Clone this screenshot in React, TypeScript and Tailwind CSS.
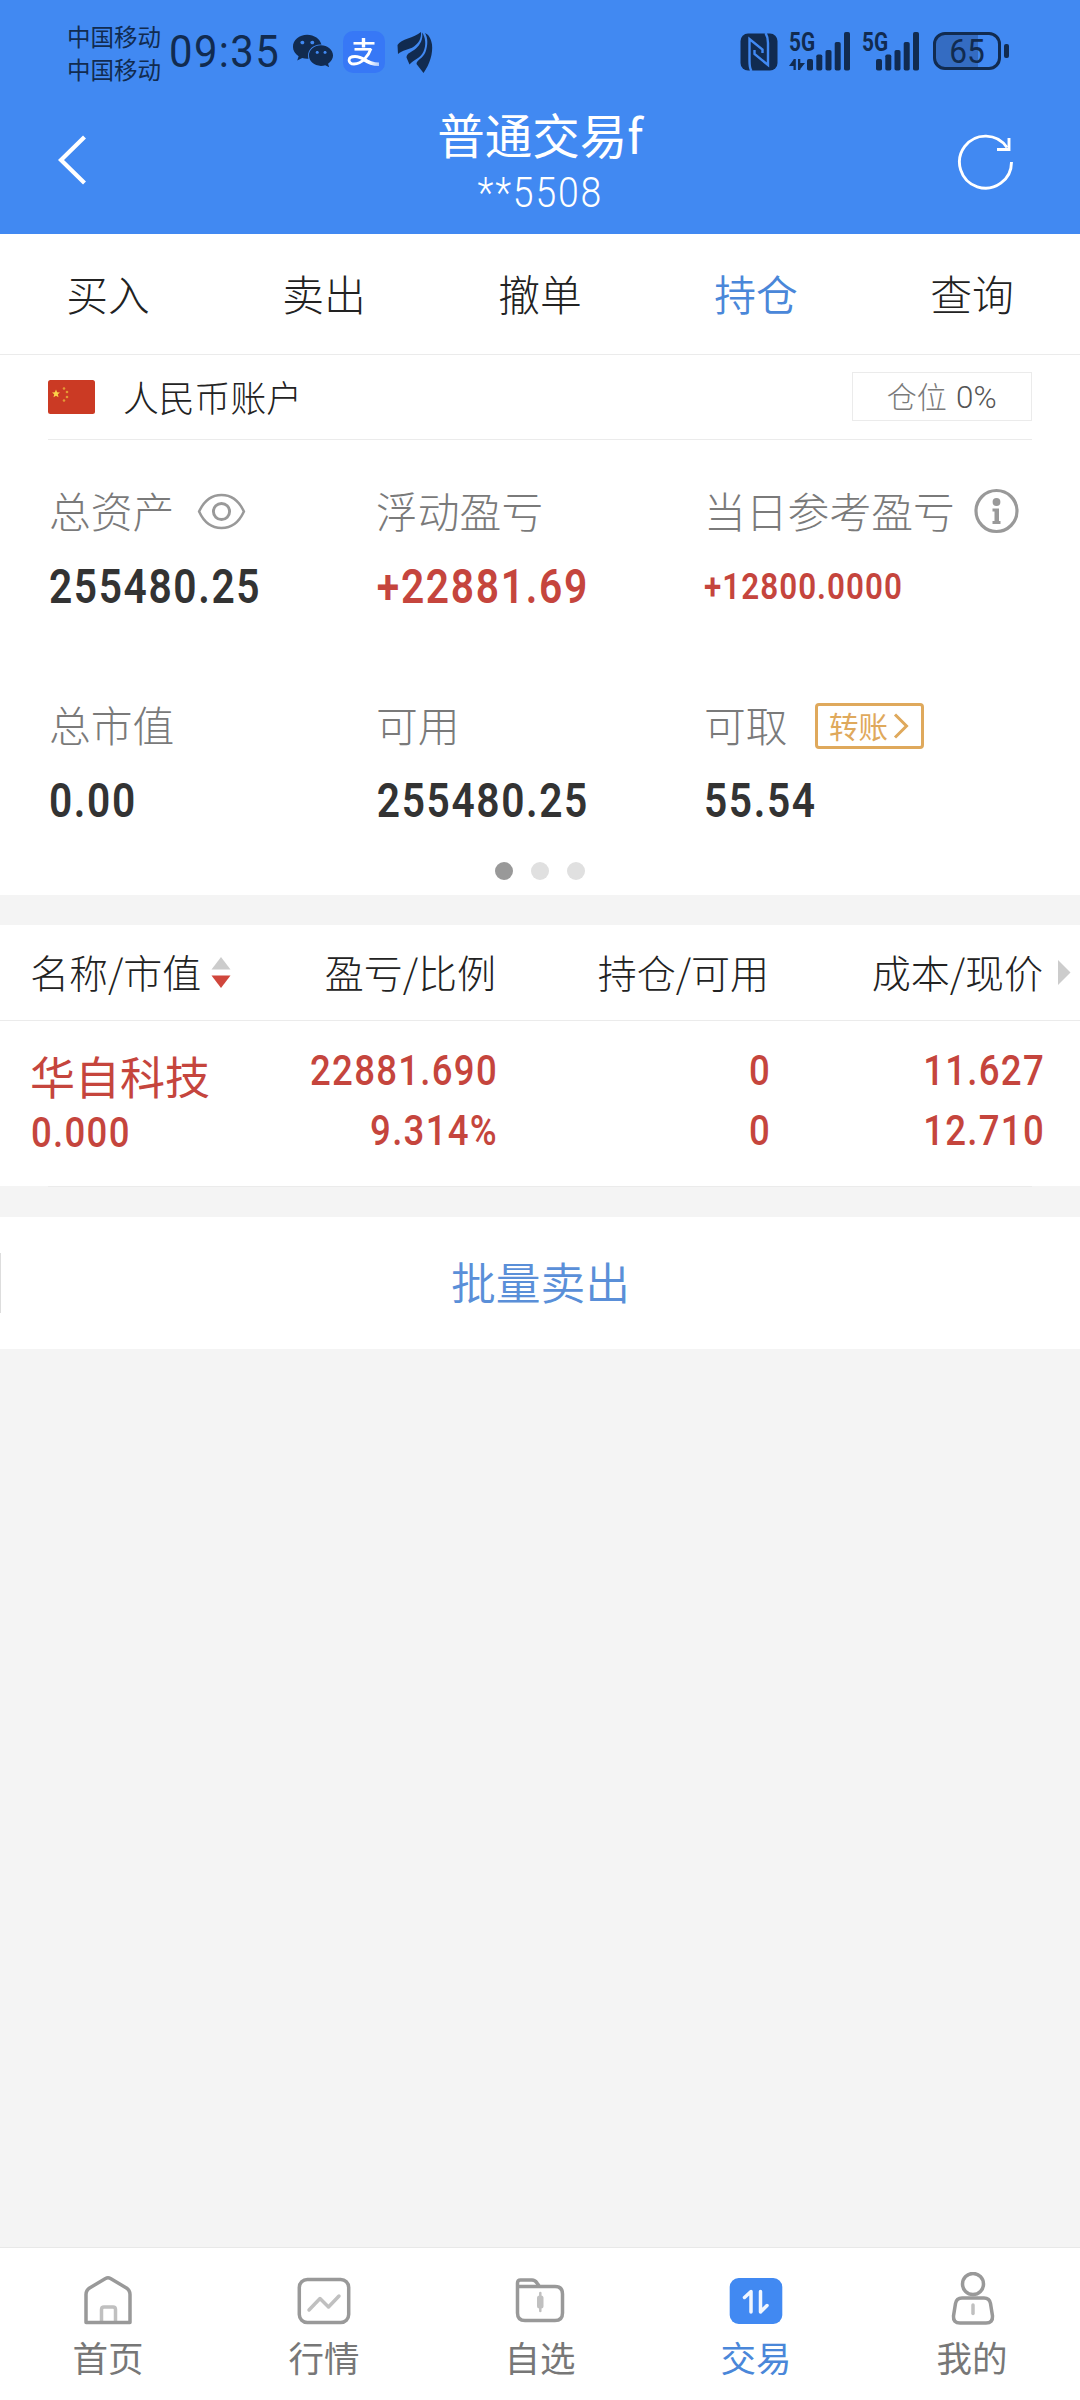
import { useState, type ReactNode } from "react"
import { FaWeixin } from "react-icons/fa"
import clsx from "clsx"

const TABS = ["买入", "卖出", "撤单", "持仓", "查询"]

interface Position {
  name: string
  marketValue: string
  profit: string
  ratio: string
  amount: string
  available: string
  cost: string
  price: string
}

const POSITIONS: Position[] = [
  {
    name: "华自科技",
    marketValue: "0.000",
    profit: "22881.690",
    ratio: "9.314%",
    amount: "0",
    available: "0",
    cost: "11.627",
    price: "12.710",
  },
]

const NAV_ITEMS = [
  { label: "首页", icon: <HomeIcon /> },
  { label: "行情", icon: <QuoteIcon /> },
  { label: "自选", icon: <FolderIcon /> },
  { label: "交易", icon: <TradeIcon /> },
  { label: "我的", icon: <UserIcon /> },
]

/* ---------- 状态栏图标 ---------- */

function AlipayIcon() {
  return (
    <svg width="42" height="42" viewBox="0 0 42 42" fill="none">
      <defs>
        <linearGradient id="tail" x1="26" y1="30" x2="37" y2="33" gradientUnits="userSpaceOnUse">
          <stop stopColor="#fff" />
          <stop offset="1" stopColor="#a9c8fb" />
        </linearGradient>
      </defs>
      <rect width="42" height="42" rx="10" fill="#3778f6" />
      <path d="M20.500 7v9.500" stroke="#fff" strokeWidth="3.400" />
      <path d="M10.500 12.300h21" stroke="#fff" strokeWidth="2.600" />
      <path d="M11.500 18.300h16.500" stroke="#fff" strokeWidth="2.600" />
      <path d="M28 17.500C25.500 25 19 33 11 33c-6.500 0-7-7.500 1-7.500 6 0 10 3.500 14 5.500" stroke="#fff" strokeWidth="2.800" />
      <path d="M22.500 27.500c3.500 2.300 8 4 13.500 4v3.500c-6 0-12-2-16-5z" fill="url(#tail)" />
    </svg>
  )
}

function WingIcon() {
  return (
    <svg width="36" height="42" viewBox="0 0 36 42" fill="#112b50">
      <path d="M24 1C17 7 4 8 .500 14L1 23C5 19 12 19 17 15.500 22 12 24.500 7 24 1z" />
      <path d="M25 1.500C26.500 8 23 14 19 17.500 15 21 9.500 22 9.500 26.500l3 7C17 28 23 28 26.500 20.500 29.500 14 28.500 6 25 1.500z" />
      <path d="M28 2C31 7 31 14 28.500 21 26.500 27 19.500 29 19.500 33l7 9C33 33 36 22 35 13.500 34 7 31.500 3.500 28 2z" />
    </svg>
  )
}

function NfcIcon() {
  return (
    <svg width="38" height="38" viewBox="0 0 38 38">
      <rect x=".500" y=".500" width="37" height="37" rx="7.500" fill="#112b50" />
      <path d="M11.500 38C9.500 35 9.500 32 9.500 28V6L22.500 16.500V20" fill="none" stroke="#4189f2" strokeWidth="2.400" />
      <path d="M25.500 0C27.500 3 28 6 28 10v22L14.500 21V17" fill="none" stroke="#4189f2" strokeWidth="2.400" />
    </svg>
  )
}

function SignalIcon({ data }: { data?: boolean }) {
  return (
    <span className="relative block h-[39px]">
      <span className="absolute top-[-1px] left-0 origin-left scale-x-[0.8] font-['Roboto',sans-serif] text-[26px] leading-[23px] font-bold">
        5G
      </span>
      <svg className={data ? "w-[61px]" : "w-[57px]"} height="39" viewBox={data ? "0 0 61 39" : "4 0 57 39"} fill="#112b50">
        {data && (
          <path d="M0 34 5 27v7zM4.500 27h2.300v11H4.500zM9 27h2.300v11H9zM10.500 31h5.500l-5.500 7z" />
        )}
        <rect x="18" y="27" width="6" height="11.500" rx="1.800" />
        <rect x="27.300" y="22.500" width="6" height="16" rx="1.800" />
        <rect x="36.500" y="18" width="6" height="20.500" rx="1.800" />
        <rect x="45.700" y="10" width="6" height="28.500" rx="1.800" />
        <rect x="55" y="0" width="6" height="38.500" rx="1.800" />
      </svg>
    </span>
  )
}

/* ---------- 底部导航图标 ---------- */

function HomeIcon() {
  return (
    <svg width="54" height="54" viewBox="0 0 54 54" fill="none" strokeWidth="3.500" strokeLinejoin="round">
      <path d="M20.500 50V37.500q0-2.500 2.500-2.500h9q2.500 0 2.500 2.500V50" stroke="#c0c0c0" />
      <path d="M5 50.500V22.500q0-4.500 4-6.800L24.500 6.500q2.500-1.400 5 0L45 15.700q4 2.300 4 6.800v28z" stroke="#999" />
    </svg>
  )
}

function QuoteIcon() {
  return (
    <svg width="54" height="54" viewBox="0 0 54 54" fill="none" strokeWidth="3.500">
      <rect x="2.300" y="7.500" width="49.400" height="43" rx="8" stroke="#999" />
      <path d="M12 38 23 26.500l8.500 8.500L42 24" stroke="#c0c0c0" strokeLinecap="round" strokeLinejoin="round" />
    </svg>
  )
}

function FolderIcon() {
  return (
    <svg width="54" height="54" viewBox="0 0 54 54" fill="none">
      <path
        d="M4.500 14.500V11q0-3 3-3H19q3 0 5 3l2.500 3.500M4.500 14.500H42q7.500 0 7.500 7.500v19q0 7.500-7.500 7.500H12q-7.500 0-7.500-7.500z"
        stroke="#999"
        strokeWidth="3.500"
        strokeLinejoin="round"
      />
      <rect x="24" y="23.500" width="6.500" height="13" rx="2.500" fill="#c0c0c0" />
      <path d="M27.300 21v18" stroke="#c0c0c0" strokeWidth="2.500" strokeLinecap="round" />
    </svg>
  )
}

function TradeIcon() {
  return (
    <svg width="54" height="54" viewBox="0 0 54 54" fill="none">
      <rect x=".700" y="6" width="52.600" height="46" rx="9" fill="#4189f2" />
      <path d="M15.500 25.500l6.500-6V40M31.500 19.500V40l6.500-6.500" stroke="#f0f6ff" strokeWidth="3.500" strokeLinecap="round" strokeLinejoin="round" />
    </svg>
  )
}

function UserIcon() {
  return (
    <svg width="54" height="54" viewBox="0 0 54 54" fill="none" strokeWidth="3.500">
      <circle cx="28" cy="12" r="10.500" stroke="#999" />
      <path d="M17 26h22q5.500 0 6.500 5.500l2 12.500q.500 7-6.500 7H15q-7 0-6.500-7l2-12.500q1-5.500 6.500-5.500z" stroke="#999" />
      <path d="M28 33v8.500" stroke="#c0c0c0" strokeLinecap="round" />
    </svg>
  )
}

function StatusBar() {
  return (
    <div className="flex h-[102px] items-start pl-[67px] text-[#112b50]">
      <div className="w-[96px] pt-[20px] text-[23.5px] leading-[33px]">
        <div>中国移动</div>
        <div>中国移动</div>
      </div>
      <div className="mt-[25px] ml-[6px] w-[109px] origin-left scale-x-[0.93] font-['Roboto',sans-serif] text-[45px] leading-[54px] tracking-[1.5px]">
        09:35
      </div>
      <FaWeixin className="mt-[30px] ml-[14px] size-[42px]" />
      <div className="mt-[31px] ml-[9px]"><AlipayIcon /></div>
      <div className="mt-[31px] ml-[12px]"><WingIcon /></div>
      <div className="mt-[33px] ml-[307px]"><NfcIcon /></div>
      <div className="mt-[32px] ml-[11px]"><SignalIcon data /></div>
      <div className="mt-[32px] ml-[12px]"><SignalIcon /></div>
      {/* 电量 */}
      <div className="mt-[32px] ml-[14px] flex items-center gap-[3px]">
        <div className="h-[38px] w-[68px] rounded-[12px] border-[3.5px] border-[#112b50] bg-[linear-gradient(to_right,#346cc2_68%,#4189f2_68%)] text-center font-['Roboto',sans-serif] text-[34px] leading-[32px]">
          <span className="inline-block scale-x-[0.93]">65</span>
        </div>
        <div className="h-[14px] w-[5px] rounded-[2px] bg-[#112b50]" />
      </div>
    </div>
  )
}

function Header() {
  return (
    <header className="h-[234px] bg-[#4189f2]">
      <StatusBar />
      <div className="flex h-[120px] justify-between pr-[66px] pl-[57px] text-white">
        <button aria-label="返回" className="mt-[32px] h-[52px] w-[60px]">
          <svg width="30" height="52" viewBox="0 0 30 52" fill="none" stroke="#fff" strokeWidth="4.200">
            <path d="M27.500 3 4 26l23.500 23" />
          </svg>
        </button>
        <div className="flex flex-col items-center pl-[6px]">
          <h1 className="pl-[3px] text-[47.5px] leading-[64px]">普通交易f</h1>
          <p className="scale-x-[0.89] pt-[2px] pl-[3px] font-['Roboto',sans-serif] text-[42px] leading-[50px] font-light tracking-[2px]">**5508</p>
        </div>
        <button aria-label="刷新" className="mt-[31px] flex h-[58px] w-[60px] justify-end">
          <svg width="58" height="58" viewBox="0 0 58 58" fill="none" stroke="#fff" strokeWidth="2.900">
            <path d="M55.500 29A26 26 0 1 1 51 14.500" />
            <path d="M53 5v11.500H41" />
          </svg>
        </button>
      </div>
    </header>
  )
}

function Stat({ label, value, className, extra }: { label: string; value: string; className: string; extra?: ReactNode }) {
  return (
    <div className="whitespace-nowrap">
      <div className="flex h-[60px] items-center">
        <span className="text-[41.8px] leading-[60px] font-light text-[#7a7a7a]">{label}</span>
        {extra}
      </div>
      <div className={clsx("mt-[17px] origin-left font-['Roboto',sans-serif] leading-[60px] font-semibold", className)}>
        {value}
      </div>
    </div>
  )
}

function Assets() {
  return (
    <section className="h-[540px] bg-white">
      <div className="mx-[48px] flex h-[85px] items-center border-b border-[#ebebeb]">
        <svg className="mt-[-1px]" width="47" height="34" viewBox="0 0 47 34">
          <rect width="47" height="34" rx="2.500" fill="#cb3a24" />
          <path d="M8 9.500l1.100 2.700 2.900.200-2.200 1.900.700 2.900L8 15.700l-2.500 1.500.700-2.900L4 12.400l2.900-.200z" fill="#fbd449" />
          <g fill="#e39a35">
            <circle cx="16" cy="8.500" r="1.300" />
            <circle cx="19" cy="12" r="1.300" />
            <circle cx="19" cy="17" r="1.300" />
            <circle cx="16" cy="20.500" r="1.300" />
          </g>
        </svg>
        <span className="ml-[28px] pb-[3px] text-[35.8px] leading-[52px] font-light text-[#222]">人民币账户</span>
        <div className="mt-[-1px] ml-auto flex h-[49px] w-[180px] items-center justify-center border border-[#ebebeb] text-[30px] leading-[46px]">
          <span className="pb-[3px] font-light text-[#7a7a7a]">仓位</span>
          <span className="ml-[9px] origin-left scale-x-[0.98] font-['Roboto',sans-serif] text-[32px] font-light text-[#555]">0%</span>
        </div>
      </div>

      <div className="grid grid-cols-[327px_328px_328px] gap-y-[77px] pt-[40px] pl-[49px]">
        <Stat
          label="总资产"
          value="255480.25"
          className="scale-x-[0.84] text-[48.5px] tracking-[1.9px] text-[#333]"
          extra={
            <svg className="mt-[2px] ml-[23px]" width="49" height="37" viewBox="0 0 50 38" fill="none" stroke="#999">
              <path d="M2 19C7 8 15 2 25 2s18 6 23 17c-5 11-13 17-23 17S7 30 2 19z" strokeWidth="2.600" />
              <circle cx="25" cy="19" r="8.300" strokeWidth="3" />
            </svg>
          }
        />
        <Stat label="浮动盈亏" value="+22881.69" className="scale-x-[0.84] pl-[1px] text-[48.5px] tracking-[2px] text-[#c5453d]" />
        <Stat
          label="当日参考盈亏"
          value="+12800.0000"
          className="scale-x-[0.86] text-[36.5px] tracking-[1.2px] text-[#c5453d]"
          extra={
            <svg className="mt-[1px] ml-[19px]" width="45" height="46" viewBox="0 0 45 46">
              <circle cx="22.500" cy="23" r="20.500" fill="none" stroke="#999" strokeWidth="3.200" />
              <circle cx="22.500" cy="14" r="3.900" fill="#999" />
              <path d="M18.500 20.500H25V33h1.500v3h-8v-3H20.500v-9.500h-2z" fill="#999" />
            </svg>
          }
        />
        <Stat label="总市值" value="0.00" className="scale-x-[0.84] text-[48.5px] tracking-[1.9px] text-[#333]" />
        <Stat label="可用" value="255480.25" className="scale-x-[0.84] pl-[1px] text-[48.5px] tracking-[1.9px] text-[#333]" />
        <Stat
          label="可取"
          value="55.54"
          className="scale-x-[0.84] text-[48.5px] tracking-[1.9px] text-[#333]"
          extra={
            <button className="mt-[3px] ml-[27px] flex h-[46px] w-[109px] items-center justify-center rounded-[4px] border-[3px] border-[#dfa95c] text-[29.5px] leading-[40px] text-[#dfa95c]">
              <span className="pb-[2px]">转账</span>
              <svg className="ml-[5px]" width="16" height="26" viewBox="0 0 16 26" fill="none" stroke="#dfa95c" strokeWidth="3">
                <path d="M2 1.500 13.500 13 2 24.500" />
              </svg>
            </button>
          }
        />
      </div>

      <div className="mt-[31px] flex justify-center gap-[18px]">
        <span className="size-[18px] rounded-full bg-[#999]" />
        <span className="size-[18px] rounded-full bg-[#e0e0e0]" />
        <span className="size-[18px] rounded-full bg-[#e0e0e0]" />
      </div>
    </section>
  )
}

function Positions() {
  return (
    <section className="mt-[30px] h-[261px] bg-white">
      <div className="grid h-[96px] grid-cols-[224px_242px_273px_274px_1fr] items-center border-b border-[#ebebeb] pl-[30px] text-right text-[39px] leading-[56px] font-light whitespace-nowrap text-[#222]">
        <div className="flex items-center">
          <span className="pb-[3px]">名称/市值</span>
          <svg className="ml-[10px]" width="20" height="32" viewBox="0 0 20 32">
            <path d="M10 0 19.500 12.500H.500z" fill="#ccc" />
            <path d="M10 31 19.500 18.500H.500z" fill="#d0463c" />
          </svg>
        </div>
        <div className="pb-[3px]">盈亏/比例</div>
        <div className="pb-[3px]">持仓/可用</div>
        <div className="pb-[3px]">成本/现价</div>
        <svg className="ml-[15px]" width="13" height="25" viewBox="0 0 13 25">
          <path d="M0 0 12.500 12.500 0 25z" fill="#ccc" />
        </svg>
      </div>
      {POSITIONS.map((p) => (
        <div
          key={p.name}
          className="grid h-[165px] grid-cols-[224px_243px_273px_274px] pl-[31px] text-right font-['Roboto',sans-serif] text-[42.5px] leading-[60px] font-medium tracking-[1.5px] whitespace-nowrap text-[#c5453d]"
        >
          <div className="pt-[23px] text-left">
            <div className="-ml-px font-['Noto_Sans_CJK_SC',sans-serif] text-[45px] leading-[64px] font-normal tracking-normal">{p.name}</div>
            <div className="mt-[-5px] origin-left scale-x-[0.86]">{p.marketValue}</div>
          </div>
          <div className="origin-right scale-x-[0.86] pt-[20px]">
            <div>{p.profit}</div>
            <div>{p.ratio}</div>
          </div>
          <div className="origin-right scale-x-[0.86] pt-[20px]">
            <div>{p.amount}</div>
            <div>{p.available}</div>
          </div>
          <div className="origin-right scale-x-[0.86] pt-[20px]">
            <div>{p.cost}</div>
            <div>{p.price}</div>
          </div>
        </div>
      ))}
    </section>
  )
}

export default function App() {
  const [tab, setTab] = useState("持仓")
  const [nav, setNav] = useState("交易")

  return (
    <div className="flex h-[2400px] w-[1080px] flex-col overflow-hidden bg-[#f4f4f4] font-['Noto_Sans_CJK_SC',sans-serif]">
      <Header />

      {/* 交易标签 */}
      <div className="grid h-[121px] grid-cols-5 border-b border-[#ebebeb] bg-white">
        {TABS.map((t) => (
          <button
            key={t}
            onClick={() => setTab(t)}
            className={clsx("pb-[3px] text-[41.8px] leading-[60px]", tab === t ? "font-[350] text-[#4a87d9]" : "font-light text-[#222]")}
          >
            {t}
          </button>
        ))}
      </div>

      <Assets />
      <Positions />

      {/* 列表底部分隔线 */}
      <div className="mx-[48px] h-px bg-[#ebebeb]" />

      <button className="mt-[30px] flex h-[132px] items-center bg-white text-[44.8px] leading-[66px] font-[350] text-[#5a8fd8]">
        <span className="h-[60px] w-px bg-[#ddd]" />
        <span className="flex-1 pb-[4px]">批量卖出</span>
      </button>

      <nav className="mt-auto grid h-[153px] grid-cols-5 border-t border-[#e8e8e8] bg-white">
        {NAV_ITEMS.map(({ label, icon }) => (
          <button key={label} onClick={() => setNav(label)} className="flex flex-col items-center pt-[24px]">
            {icon}
            <span className={clsx("mt-[5px] text-[35.5px] leading-[52px]", nav === label ? "text-[#4a87d9]" : "text-[#777]")}>
              {label}
            </span>
          </button>
        ))}
      </nav>
    </div>
  )
}
